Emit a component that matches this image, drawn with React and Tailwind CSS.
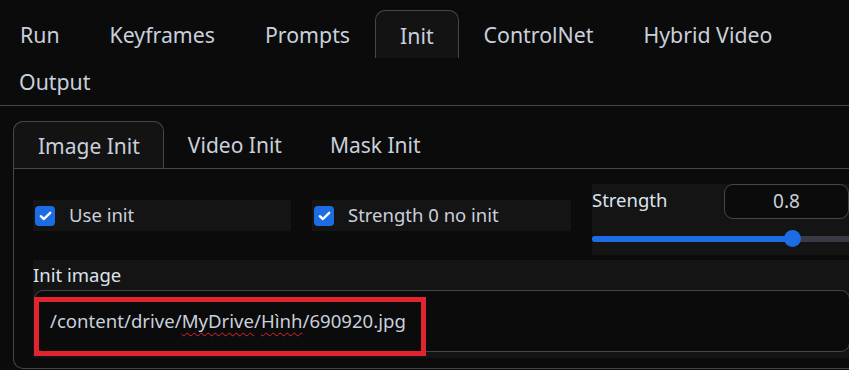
import React from "react";

const font = { fontFamily: '"Noto Sans", "Open Sans", sans-serif' };

function Check({ label }) {
  return (
    <div className="flex h-[31px] items-center bg-[#141414] pl-[2px]">
      <span className="flex h-[20px] w-[20px] items-center justify-center rounded-[4px] bg-[#1c6ce6]">
        <svg width="13" height="10" viewBox="0 0 13 10" fill="none">
          <path d="M1.8 5.2 L4.9 8 L11.2 1.8" stroke="white" strokeWidth="2.4" strokeLinecap="round" strokeLinejoin="round" />
        </svg>
      </span>
      <span className="ml-[14px] text-[18.5px] leading-none text-[#c9d0dc]">{label}</span>
    </div>
  );
}

export default function App() {
  const topTabs = ["Run", "Keyframes", "Prompts", "Init", "ControlNet", "Hybrid Video"];
  return (
    <div className="h-[370px] w-[849px] overflow-hidden bg-[#0b0b0b] text-[#c9d0dc]" style={font}>
      <div className="flex flex-wrap -ml-[5px] pt-[10px] border-b border-[#45454f]">
        {topTabs.map((t) => (
          <div
            key={t}
            className={
              "flex h-[48px] items-center px-[24px] pt-[2px] text-[21.3px] " +
              (t === "Init" ? "rounded-t-[10px] border border-b-0 border-[#45454f] bg-[#131313]" : "border border-transparent")
            }
          >
            {t}
          </div>
        ))}
        <div className="flex h-[47px] items-center px-[24px] pt-[1px] text-[21.3px]">Output</div>
      </div>

      <div className="ml-[13px] mt-[15px] w-[850px] rounded-b-[10px] rounded-tl-[10px] border-l border-b border-[#45454f] pb-[10px]">
        <div className="flex border-b border-[#45454f]">
          <div className="-ml-px flex h-[47px] items-center rounded-t-[10px] border border-b-0 border-[#45454f] bg-[#131313] pl-[24px] pr-[23px] pt-[3px] text-[21px]">
            Image Init
          </div>
          <div className="flex h-[47px] items-center px-[24px] pt-[3px] text-[21px]">Video Init</div>
          <div className="flex h-[47px] items-center px-[24px] pt-[3px] text-[21px]">Mask Init</div>
        </div>

        <div className="ml-[19px] mt-[15px] flex w-[817px] gap-[21px]">
          <div className="mt-[16px] w-[258px]">
            <Check label="Use init" />
          </div>
          <div className="mt-[16px] w-[259px]">
            <Check label="Strength 0 no init" />
          </div>
          <div className="h-[71px] flex-1 bg-[#141414]">
            <div className="flex items-start justify-between">
              <span className="mt-[4px] text-[18.5px] leading-[24px] text-[#dde3ec]">Strength</span>
              <div className="mr-px flex h-[35px] w-[125px] items-center justify-center rounded-[9px] border border-[#45454f] bg-[#0b0b0b] text-[19px]">
                0.8
              </div>
            </div>
            <div className="relative mt-[17px] h-[6px] rounded-full bg-[#3a3a44]">
              <div className="h-full w-[201px] rounded-l-full bg-[#1c6ce6]" />
              <div className="absolute left-[192px] top-[-6px] h-[17px] w-[17px] rounded-full bg-[#1c6ce6]" />
            </div>
          </div>
        </div>

        <div className="ml-[19px] mt-[5px] w-[817px] bg-[#141414] pb-[6px]">
          <div className="h-[30px] pt-[3px] text-[18.5px] leading-[24px] text-[#dde3ec]">Init image</div>
          <div className="relative ml-px flex h-[62px] items-center rounded-[9px] border border-[#45454f] bg-[#0b0b0b] pl-[15px] text-[18.6px]">
            <span>
              /content/drive/<span className="underline decoration-wavy decoration-[#e02530] decoration-1 underline-offset-4">MyDrive</span>/<span className="underline decoration-wavy decoration-[#e02530] decoration-1 underline-offset-4">Hình</span>/690920.jpg
            </span>
            <div className="absolute left-[-1px] top-[6px] h-[59px] w-[392px] border-[5px] border-[#e02530]" />
          </div>
        </div>
      </div>
    </div>
  );
}
